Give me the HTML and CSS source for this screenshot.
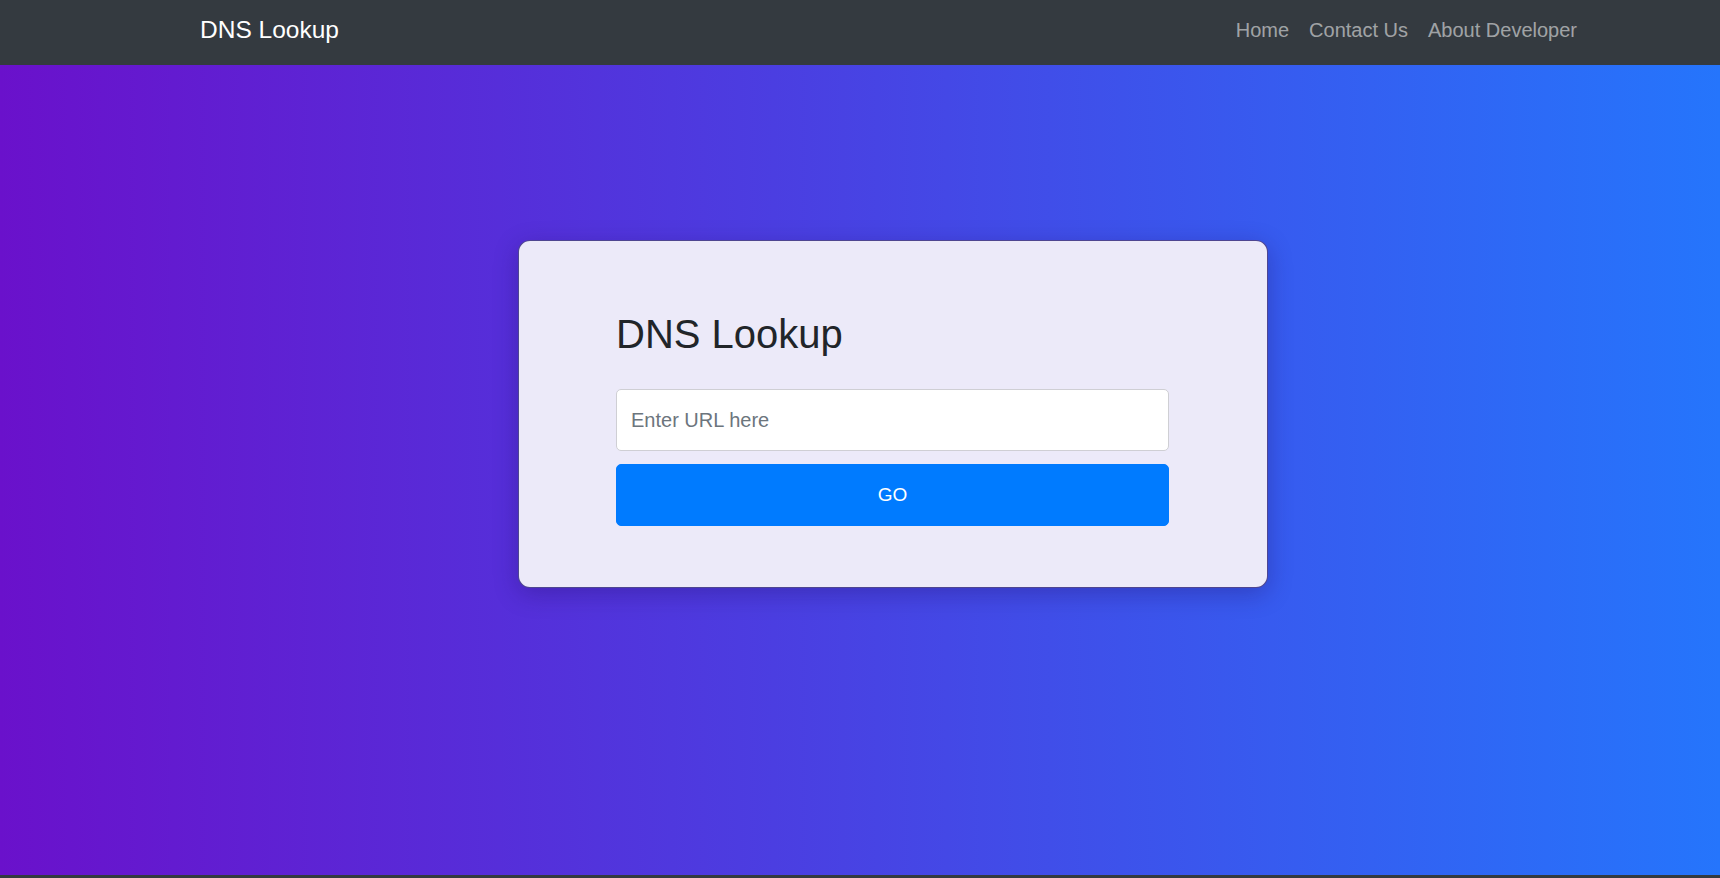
FILE: index.html
```html
<!DOCTYPE html>
<html lang="en">
<head>
<meta charset="utf-8">
<title>DNS Lookup</title>
<link rel="stylesheet" href="styles.css">
</head>
<body>
<nav class="navbar">
  <a class="brand" href="#">DNS Lookup</a>
  <ul class="nav-links">
    <li><a href="#">Home</a></li>
    <li><a href="#">Contact Us</a></li>
    <li><a href="#">About Developer</a></li>
  </ul>
</nav>
<main class="hero">
  <section class="card">
    <h1 class="title">DNS Lookup</h1>
    <form class="lookup-form" onsubmit="return false;">
      <input class="url-input" type="text" placeholder="Enter URL here">
      <button class="go-btn" type="submit">GO</button>
    </form>
  </section>
</main>
<footer class="footer"></footer>
</body>
</html>
```
FILE: styles.css
```css
* { box-sizing: border-box; }
html, body { margin: 0; padding: 0; }
body {
  font-family: "Liberation Sans", Arial, sans-serif;
  height: 878px;
  display: flex;
  flex-direction: column;
  overflow: hidden;
}
.navbar {
  height: 65px;
  flex: 0 0 65px;
  background: #343a40;
  display: flex;
  align-items: center;
  justify-content: space-between;
  padding: 0 133px 6px 200px;
}
.brand {
  color: #fff;
  text-decoration: none;
  font-size: 24.5px;
  line-height: 30px;
}
.nav-links {
  list-style: none;
  margin: 0;
  padding: 0;
  display: flex;
}
.nav-links a {
  display: block;
  color: rgba(255,255,255,0.55);
  text-decoration: none;
  font-size: 20px;
  line-height: 24px;
  padding: 0 10px;
}
.hero {
  flex: 1 1 auto;
  background: linear-gradient(to right, #6a11cb, #2575fc);
  padding-top: 175px;
  padding-left: 518px;
}
.card {
  width: 750px;
  height: 348px;
  background: #eceaf9;
  border: 1px solid rgba(25, 15, 110, 0.75);
  border-radius: 12px;
  box-shadow: 0 6px 24px rgba(30, 10, 90, 0.3);
  padding: 69px 98px 0 97px;
}
.title {
  margin: 0 0 31px;
  font-weight: normal;
  font-size: 40px;
  line-height: 48px;
  color: #212529;
}
.lookup-form {
  display: flex;
  flex-direction: column;
  gap: 13px;
}
.url-input {
  height: 62px;
  width: 553px;
  border: 1px solid #cfcfd4;
  border-radius: 5px;
  background: #fff;
  padding: 0 14px;
  font-family: "Liberation Sans", Arial, sans-serif;
  font-size: 20px;
  color: #495057;
  outline: none;
}
.url-input::placeholder { color: #6c757d; }
.go-btn {
  height: 62px;
  width: 553px;
  border: 1px solid #007bff;
  border-radius: 5px;
  background: #007bff;
  color: #fff;
  font-family: "Liberation Sans", Arial, sans-serif;
  font-size: 19px;
  cursor: pointer;
}
.footer {
  flex: 0 0 3px;
  height: 3px;
  background: #343a40;
}
```
